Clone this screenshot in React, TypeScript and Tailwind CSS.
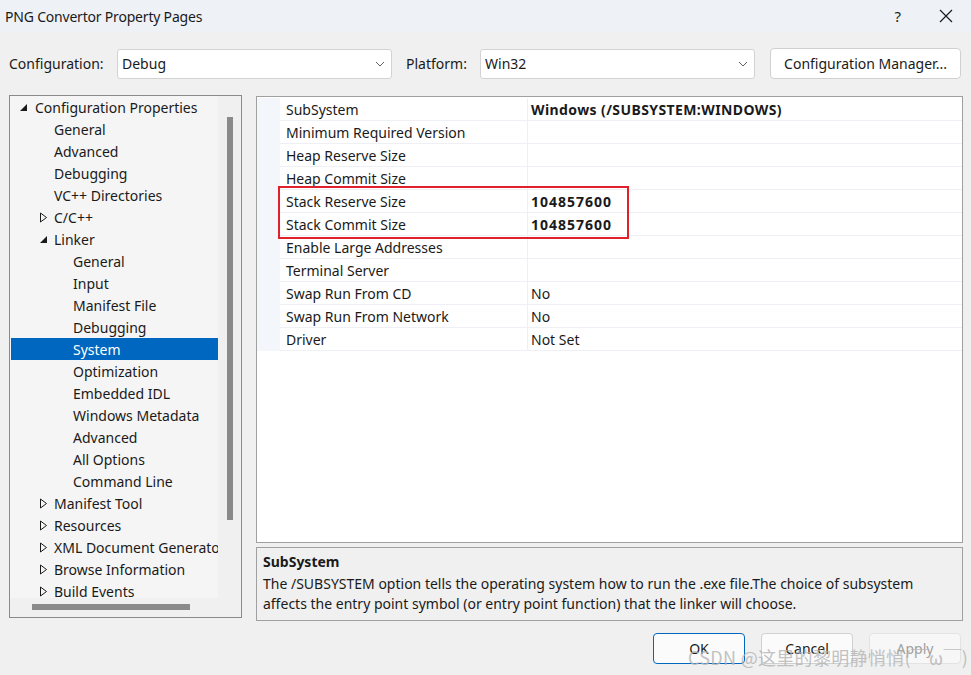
import React from "react";

const FONT = { fontFamily: '"Noto Sans", "Open Sans", "Noto Sans CJK SC", sans-serif' };

type TreeItem = { label: string; level: number; arrow?: "open" | "closed"; selected?: boolean };

const tree: TreeItem[] = [
  { label: "Configuration Properties", level: 0, arrow: "open" },
  { label: "General", level: 1 },
  { label: "Advanced", level: 1 },
  { label: "Debugging", level: 1 },
  { label: "VC++ Directories", level: 1 },
  { label: "C/C++", level: 1, arrow: "closed" },
  { label: "Linker", level: 1, arrow: "open" },
  { label: "General", level: 2 },
  { label: "Input", level: 2 },
  { label: "Manifest File", level: 2 },
  { label: "Debugging", level: 2 },
  { label: "System", level: 2, selected: true },
  { label: "Optimization", level: 2 },
  { label: "Embedded IDL", level: 2 },
  { label: "Windows Metadata", level: 2 },
  { label: "Advanced", level: 2 },
  { label: "All Options", level: 2 },
  { label: "Command Line", level: 2 },
  { label: "Manifest Tool", level: 1, arrow: "closed" },
  { label: "Resources", level: 1, arrow: "closed" },
  { label: "XML Document Generator", level: 1, arrow: "closed" },
  { label: "Browse Information", level: 1, arrow: "closed" },
  { label: "Build Events", level: 1, arrow: "closed" },
];

const props: { name: string; value: string; style?: "bold" | "digits" }[] = [
  { name: "SubSystem", value: "Windows (/SUBSYSTEM:WINDOWS)", style: "bold" },
  { name: "Minimum Required Version", value: "" },
  { name: "Heap Reserve Size", value: "" },
  { name: "Heap Commit Size", value: "" },
  { name: "Stack Reserve Size", value: "104857600", style: "digits" },
  { name: "Stack Commit Size", value: "104857600", style: "digits" },
  { name: "Enable Large Addresses", value: "" },
  { name: "Terminal Server", value: "" },
  { name: "Swap Run From CD", value: "No" },
  { name: "Swap Run From Network", value: "No" },
  { name: "Driver", value: "Not Set" },
];

function Chevron() {
  return (
    <svg width="10" height="6" viewBox="0 0 10 6" className="shrink-0">
      <polyline points="1,1 5,5 9,1" fill="none" stroke="#606060" strokeWidth="1" />
    </svg>
  );
}

function Arrow({ kind }: { kind: "open" | "closed" }) {
  if (kind === "open") {
    return (
      <svg width="9" height="9" viewBox="0 0 9 9">
        <polygon points="8,1 8,8 1,8" fill="#1a1a1a" />
      </svg>
    );
  }
  return (
    <svg width="9" height="11" viewBox="0 0 9 11">
      <polygon points="1.5,1 7.5,5.5 1.5,10" fill="none" stroke="#1a1a1a" strokeWidth="1" />
    </svg>
  );
}

function Select({ value }: { value: string }) {
  return (
    <div className="flex h-[30px] w-[275px] items-center justify-between rounded-[3px] border border-[#d3d3d3] bg-white pl-[4px] pr-[6px] text-[14px] text-[#1a1a1a]">
      <span>{value}</span>
      <Chevron />
    </div>
  );
}

export default function App() {
  return (
    <div className="relative flex h-[675px] w-[971px] flex-col overflow-hidden bg-[#f0f0f0] text-[#1a1a1a]" style={FONT}>
      {/* Title bar */}
      <div className="flex h-[32px] items-center bg-[#eef2f7] pl-[5px] pr-[18px]">
        <span className="text-[14px] tracking-[-0.2px]">PNG Convertor Property Pages</span>
        <div className="ml-auto flex items-center gap-[38px]">
          <span className="text-[15px]">?</span>
          <svg width="14" height="14" viewBox="0 0 14 14">
            <path d="M1 1 L13 13 M13 1 L1 13" stroke="#1a1a1a" strokeWidth="1.2" />
          </svg>
        </div>
      </div>

      {/* Config row */}
      <div className="mt-[16px] flex h-[31px] items-center pl-[9px] text-[14px]">
        <span className="w-[108px]">Configuration:</span>
        <Select value="Debug" />
        <span className="ml-[14px] w-[74px]">Platform:</span>
        <Select value="Win32" />
        <div className="ml-[15px] flex h-[31px] w-[191px] items-center justify-center rounded-[4px] border border-[#d0d0d0] bg-white text-[14px]">
          Configuration Manager...
        </div>
      </div>

      {/* Main */}
      <div className="mt-[16px] flex pl-[9px]">
        {/* Tree panel */}
        <div className="flex h-[523px] w-[233px] flex-col border border-[#8a8a8a] bg-[#f0f0f0]">
          <div className="flex h-[502px]">
            <div className="w-[208px] overflow-hidden bg-[#f5f5f5] pl-[1px]">
              {tree.map((t, i) => (
                <div
                  key={i}
                  className={
                    "flex h-[22px] items-center whitespace-nowrap text-[14px] " +
                    (t.selected ? "bg-[#0067c0] text-white" : "")
                  }
                >
                  <div
                    className={
                      "flex shrink-0 items-center justify-start " +
                      (t.level === 0 ? "w-[24px] pl-[8px]" : t.level === 1 ? "w-[43px] pl-[28px]" : "w-[62px]")
                    }
                  >
                    {t.arrow ? <Arrow kind={t.arrow} /> : null}
                  </div>
                  <span>{t.label}</span>
                </div>
              ))}
            </div>
            <div className="flex flex-1 justify-center pt-[21px]">
              <div className="h-[403px] w-[6px] bg-[#8a8a8a]" />
            </div>
          </div>
          <div className="flex h-[18px] items-center pl-[22px]">
            <div className="h-[6px] w-[158px] bg-[#8a8a8a]" />
          </div>
        </div>

        {/* Right side */}
        <div className="ml-[14px] mt-[1px] flex w-[707px] flex-col">
          <div className="relative h-[447px] border border-[#a0a0a0] bg-white pt-[1px]">
            {props.map((p, i) => (
              <div key={i} className="flex h-[23px] text-[14px]">
                <div className="w-[23px] shrink-0 bg-[#f3f6fb]" />
                <div className="flex w-[248px] shrink-0 items-center border-b border-r border-[#eef0f5] pl-[6px]">
                  {p.name}
                </div>
                <div
                  className={
                    "flex flex-1 items-center border-b border-[#eef0f5] pl-[3px] " +
                    (p.style === "bold" ? "font-bold tracking-[0.4px]" : p.style === "digits" ? "font-bold tracking-[1px]" : "")
                  }
                >
                  {p.value}
                </div>
              </div>
            ))}
            <div className="absolute left-[21px] top-[89px] h-[53px] w-[351px] border-2 border-[#e0212b]" />
          </div>
          <div className="mt-[4px] flex h-[74px] flex-col border border-[#a0a0a0] bg-[#f0f0f0] px-[6px] pt-[4px] text-[14px] leading-[20px]">
            <span className="font-bold">SubSystem</span>
            <span className="mt-[2px]">The /SUBSYSTEM option tells the operating system how to run the .exe file.The choice of subsystem</span>
            <span>affects the entry point symbol (or entry point function) that the linker will choose.</span>
          </div>
        </div>
      </div>

      {/* Buttons */}
      <div className="mt-[12px] flex justify-end gap-[16px] pr-[10px] text-[14px]">
        <div className="flex h-[31px] w-[92px] items-center justify-center rounded-[4px] border border-[#0067c0] bg-[#fbfbfb]">OK</div>
        <div className="flex h-[31px] w-[92px] items-center justify-center rounded-[4px] border border-[#d0d0d0] bg-[#fbfbfb]">Cancel</div>
        <div className="flex h-[31px] w-[92px] items-center justify-center rounded-[4px] border border-[#e3e3e3] bg-[#f7f7f7] text-[#a0a0a0]">Apply</div>
      </div>

      {/* Watermark */}
      <div
        className="pointer-events-none absolute left-[688px] top-[644px] whitespace-nowrap text-[18px] tracking-[0.3px] text-[#b4b4b4] opacity-80"
        style={{ fontFamily: '"Noto Sans CJK SC", "Noto Sans", sans-serif' }}
      >
        CSDN @这里的黎明静悄悄(￣ω￣)
      </div>
    </div>
  );
}
